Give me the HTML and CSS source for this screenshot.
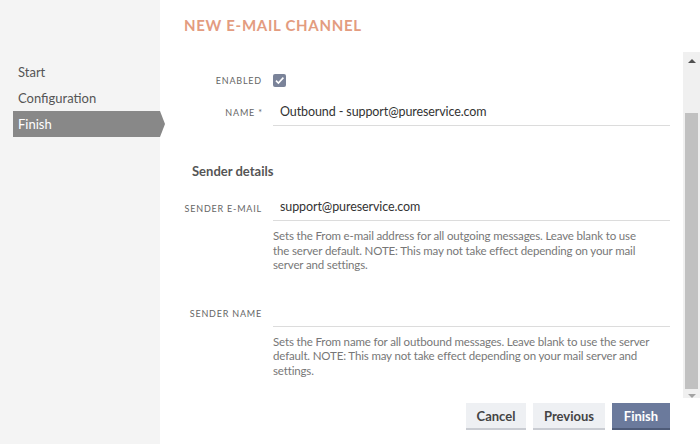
FILE: index.html
```html
<!DOCTYPE html>
<html lang="en">
<head>
<meta charset="utf-8">
<title>New e-mail channel</title>
<link rel="stylesheet" href="styles.css">
</head>
<body>
<aside class="sidebar">
  <nav class="steps">
    <div class="step">Start</div>
    <div class="step">Configuration</div>
    <div class="step step-active">Finish</div>
  </nav>
</aside>
<main class="main">
  <header class="header">
    <h1 class="title">NEW E-MAIL CHANNEL</h1>
  </header>
  <div class="body">
    <div class="content">
      <div class="field field-check">
        <label class="label">ENABLED</label>
        <span class="checkbox">
          <svg width="13" height="13" viewBox="0 0 13 13"><path d="M3 6.6 L5.4 9 L10.4 3.6" fill="none" stroke="#fff" stroke-width="1.6"/></svg>
        </span>
      </div>
      <div class="field">
        <label class="label">NAME <span class="req">*</span></label>
        <div class="input">Outbound - support@pureservice.com</div>
      </div>
      <h2 class="section">Sender details</h2>
      <div class="field field-sender">
        <label class="label">SENDER E-MAIL</label>
        <div class="input">support@pureservice.com</div>
      </div>
      <p class="help">Sets the From e-mail address for all outgoing messages. Leave blank to use the server default. NOTE: This may not take effect depending on your mail server and settings.</p>
      <div class="field field-name">
        <label class="label">SENDER NAME</label>
        <div class="input"></div>
      </div>
      <p class="help">Sets the From name for all outbound messages. Leave blank to use the server default. NOTE: This may not take effect depending on your mail server and settings.</p>
    </div>
    <div class="scrollbar">
      <span class="arrow arrow-up"></span>
      <div class="track"><div class="thumb"></div></div>
      <span class="arrow arrow-down"></span>
    </div>
  </div>
  <footer class="footer">
    <button class="btn btn-cancel">Cancel</button>
    <button class="btn btn-prev">Previous</button>
    <button class="btn btn-primary">Finish</button>
  </footer>
</main>
</body>
</html>
```
FILE: styles.css
```css
* { box-sizing: border-box; }
html, body { margin: 0; padding: 0; }
body {
  width: 700px;
  height: 444px;
  display: flex;
  background: #fff;
  font-family: "Lato", "Liberation Sans", sans-serif;
  color: #444;
  overflow: hidden;
}
.sidebar {
  width: 160px;
  flex: none;
  background: #f4f4f4;
  position: relative;
  z-index: 1;
}
.steps {
  padding-top: 59px;
}
.step {
  height: 26px;
  line-height: 26px;
  padding-left: 18px;
  font-size: 13px;
  color: #555;
}
.step-active {
  margin-left: 13px;
  width: 152px;
  padding-left: 5px;
  background: #888;
  color: #fff;
  clip-path: polygon(0 0, calc(100% - 5px) 0, 100% 50%, calc(100% - 5px) 100%, 0 100%);
}
.main {
  flex: 1;
  display: flex;
  flex-direction: column;
}
.header {
  height: 52px;
  padding: 15px 0 0 24px;
}
.title {
  margin: 0;
  font-family: "Lato", sans-serif;
  font-weight: 700;
  font-size: 15px;
  letter-spacing: 0.7px;
  color: #e39c80;
  line-height: 20px;
}
.body {
  height: 346px;
  display: flex;
}
.content {
  flex: 1;
  padding-top: 18px;
}
.field {
  display: grid;
  grid-template-columns: 102px 397px;
  column-gap: 11px;
  align-items: center;
}
.field-check {
  height: 20px;
  margin-bottom: 9px;
}
.label {
  text-align: right;
  font-size: 9px;
  letter-spacing: 0.8px;
  color: #666;
}
.req { letter-spacing: 0; }
.checkbox {
  width: 13px;
  height: 13px;
  background: #7a8399;
  border-radius: 2px;
  display: block;
}
.checkbox svg { display: block; }
.input {
  height: 27px;
  line-height: 26px;
  border-bottom: 1px solid #dcdcdc;
  padding-left: 7px;
  font-size: 12.5px;
  letter-spacing: -0.1px;
  color: #333;
}
.section {
  margin: 35px 0 0 32px;
  height: 20px;
  line-height: 20px;
  font-size: 13px;
  font-weight: 700;
  color: #555;
}
.field-sender {
  margin-top: 14px;
}
.field-sender .input { height: 26px; line-height: 24px; }
.help {
  margin: 8px 0 0 113px;
  width: 378px;
  font-size: 11.5px;
  letter-spacing: -0.15px;
  line-height: 14.5px;
  color: #777;
}
.field-name {
  margin-top: 28px;
}
.field-name .input { height: 26px; }
.scrollbar {
  width: 17px;
  flex: none;
  background: #f0f0f0;
  display: flex;
  flex-direction: column;
  align-items: center;
}
.arrow {
  width: 0;
  height: 0;
  border-left: 4px solid transparent;
  border-right: 4px solid transparent;
}
.arrow-up {
  margin-top: 7px;
  border-bottom: 4px solid #505050;
}
.arrow-down {
  margin-top: 5px;
  border-top: 4px solid #a3a3a3;
}
.track {
  width: 100%;
  flex: 1;
  padding: 50px 2px 0;
  display: flex;
}
.thumb {
  flex: 1;
  background: #c1c1c1;
}
.footer {
  display: flex;
  justify-content: flex-end;
  gap: 7px;
  padding: 5px 30px 0 0;
}
.btn {
  height: 27px;
  border: 0;
  border-bottom: 2px solid #c9ccd2;
  background: #eef0f3;
  font-family: "Lato", "Liberation Sans", sans-serif;
  font-size: 13px;
  font-weight: 700;
  color: #444;
  padding: 0;
}
.btn-cancel { width: 60px; }
.btn-prev { width: 72px; }
.btn-primary {
  width: 58px;
  background: #6b7a9c;
  border-bottom-color: #4e5b78;
  color: #fff;
}
```
